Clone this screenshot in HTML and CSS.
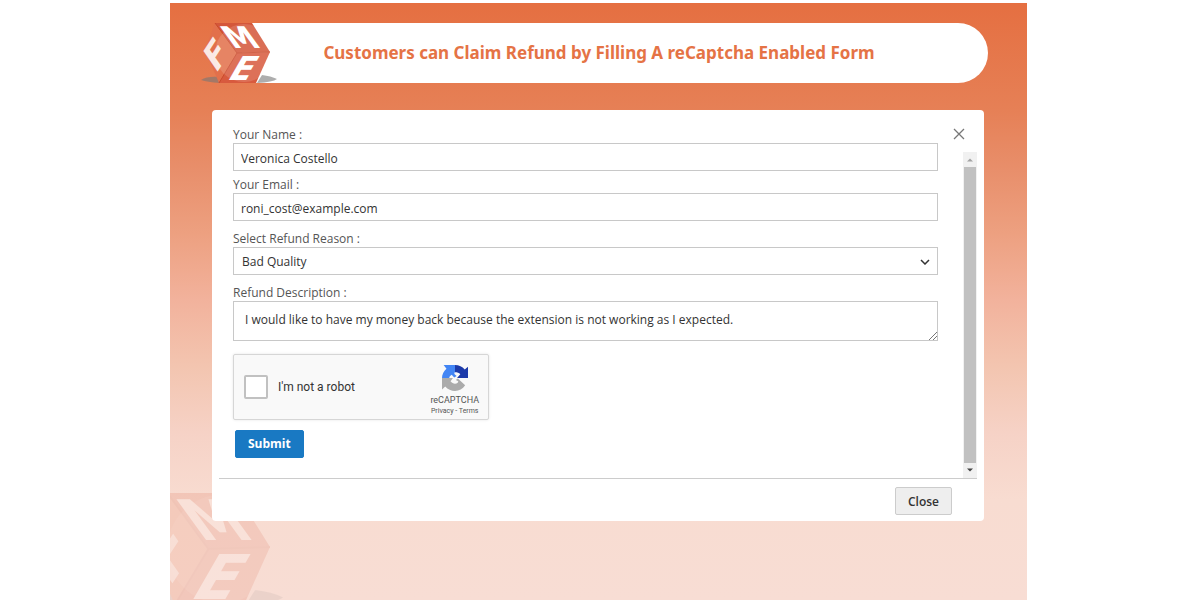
FILE: index.html
```html
<!DOCTYPE html>
<html lang="en">
<head>
  <meta charset="UTF-8">
  <meta name="viewport" content="width=device-width, initial-scale=1.0">
  <title>Refund Request</title>
  <link rel="stylesheet" href="styles.css">
</head>
<body>
<main class="stage">
  <svg class="watermark" viewBox="0 0 90 75" aria-hidden="true">
    <use href="#cube"/>
  </svg>
  <header class="banner">
    <svg class="logo" viewBox="0 0 90 75" role="img" aria-label="FME">
      <g id="cube">
        <path class="cube-shadow" d="M6 65 Q12 61 25 62 L25 68 Q12 67 6 65Z M62 68 L67 60 Q76 61 82 64 Q78 67 62 68Z"/>
        <path class="cube-left" d="M20 8 L42 38 L24 68 L10 35Z"/>
        <path class="cube-top" d="M20 8 L57 8 L75 37 L42 38Z"/>
        <path class="cube-front" d="M42 38 L75 37 L61 68 L24 68Z"/>
        <path class="cube-edge" d="M20 8 L42 38 L24 68 M42 38 L75 37"/>
        <circle class="cube-shine" cx="49" cy="38" r="29"/>
        <text class="cube-letter letter-f" transform="matrix(.55 -.84 .57 .82 21 59)">F</text>
        <text class="cube-letter letter-m" transform="translate(38 33) skewX(36)">M</text>
        <text class="cube-letter letter-e" transform="translate(31 65) skewX(-30)">E</text>
      </g>
    </svg>
    <h1>Customers can Claim Refund by Filling A reCaptcha Enabled Form</h1>
  </header>

  <section class="modal">
    <div class="modal-body">
      <form class="refund-form">
        <div class="field">
          <label for="name">Your Name :</label>
          <input type="text" id="name" value="Veronica Costello">
        </div>
        <div class="field">
          <label for="email">Your Email :</label>
          <input type="text" id="email" value="roni_cost@example.com">
        </div>
        <div class="field field-spaced">
          <label for="reason">Select Refund Reason :</label>
          <div class="select-wrap">
            <select id="reason">
              <option>Bad Quality</option>
            </select>
            <svg class="chevron" viewBox="0 0 10 6" aria-hidden="true"><path d="M1 1 L5 5 L9 1"/></svg>
          </div>
        </div>
        <div class="field field-spaced">
          <label for="description">Refund Description :</label>
          <div class="select-wrap">
            <textarea id="description" rows="1">I would like to have my money back because the extension is not working as I expected.</textarea>
            <svg class="grip" viewBox="0 0 8 8" aria-hidden="true"><path d="M0 8 L8 0 M4 8 L8 4"/></svg>
          </div>
        </div>
        <div class="captcha">
          <input type="checkbox" id="robot">
          <label for="robot">I'm not a robot</label>
          <div class="captcha-brand">
            <svg class="captcha-logo" viewBox="0 0 64 64" aria-hidden="true">
              <path fill="#1c3aa9" d="M32 0 C42 0 50 4 56 11 L64 4 V32 H37 L45 23 C42 19 38 18 32 18Z"/>
              <path fill="#4285f4" d="M32 0 V18 C30 19 30 20 31 23 L36 27 L30 31 L24 24 C20 26 18 29 18 32 H0 C0 23 4 15 11 9 L4 0Z"/>
              <path fill="#ababab" d="M0 32 H27 L21 40 C24 44 28 46 32 46 C37 46 40 43 40 40 L34 37 L39 33 L57 50 C51 59 42 64 32 64 C23 64 14 60 8 53 L0 60Z"/>
            </svg>
            <span class="captcha-name">reCAPTCHA</span>
            <span class="captcha-links"><a href="#">Privacy</a> - <a href="#">Terms</a></span>
          </div>
        </div>
        <button type="submit" class="submit">Submit</button>
      </form>
      <div class="modal-side">
        <button type="button" class="dismiss" aria-label="Close">
          <svg viewBox="0 0 12 12"><path d="M1 1 L11 11 M11 1 L1 11"/></svg>
        </button>
        <div class="scrollbar">
          <svg class="arrow" viewBox="0 0 14 14"><path fill="#a3a3a3" d="M4 9 L7 6 L10 9Z"/></svg>
          <div class="thumb"></div>
          <svg class="arrow" viewBox="0 0 14 14"><path fill="#444" d="M4 5 L7 8 L10 5Z"/></svg>
        </div>
      </div>
    </div>
    <footer class="modal-footer">
      <button type="button" class="close">Close</button>
    </footer>
  </section>
</main>
</body>
</html>
```

FILE: styles.css
```css
* {
  box-sizing: border-box;
}

body {
  margin: 0;
  padding: 3px 173px 3px 170px;
  background: #fff;
  color: #333;
  font-family: "Open Sans", "Noto Sans", sans-serif;
  font-size: 12px;
}

input, select, textarea, button {
  font-family: inherit;
  font-size: 12px;
  color: #333;
}

.stage {
  position: relative;
  overflow: hidden;
  padding: 20px 39px 79px 42px;
  background: linear-gradient(#e56f41 0, #e68056 107px, #e88e6a 164px, #eda080 230px, #f2b29c 297px, #f3c5b0 364px, #f6d2c6 430px, #f8dcd1 497px, #f8ddd4 100%);
}

/* banner */
.banner {
  position: relative;
  display: flex;
  align-items: center;
  justify-content: center;
  height: 60px;
  margin-left: 30px;
  padding-right: 32px;
  border-radius: 0 30px 30px 0;
  background: #fff;
}

.banner h1 {
  margin: 0;
  color: #e57345;
  font-family: "Noto Sans", sans-serif;
  font-size: 17px;
  font-weight: 700;
  line-height: 24px;
}

.logo {
  position: absolute;
  left: -47px;
  top: -8px;
  width: 90px;
  height: 75px;
}

.watermark {
  position: absolute;
  left: -40px;
  bottom: -18px;
  width: 168px;
  height: 140px;
  opacity: .16;
}

.cube-shadow {
  fill: #777;
  opacity: .6;
}

.cube-left {
  fill: #e2704b;
}

.cube-top {
  fill: #d4573a;
}

.cube-front {
  fill: #d85a3e;
}

.cube-edge {
  fill: none;
  stroke: #c94a2c;
}

.cube-shine {
  fill: #fff;
  opacity: .14;
}

.cube-letter {
  fill: #fff;
  font-family: "DejaVu Sans", sans-serif;
  font-weight: 700;
}

.letter-f {
  font-size: 34px;
  opacity: .85;
}

.letter-m {
  font-size: 30px;
}

.letter-e {
  font-size: 33px;
}

/* modal */
.modal {
  position: relative;
  margin: 27px 4px 0 0;
  padding: 15px 7px 6px;
  border-radius: 4px;
  background: #fff;
}

.modal-body {
  display: flex;
  border-bottom: 1px solid #ccc;
}

.refund-form {
  flex: 1;
  display: flex;
  flex-direction: column;
  align-items: flex-start;
  padding: 0 0 20px 14px;
}

.field {
  width: 100%;
  margin-bottom: 4px;
}

.field-spaced {
  margin-top: 4px;
}

.field label {
  display: block;
  height: 18px;
  color: #555;
  line-height: 20px;
}

.field input, .field select, .field textarea {
  display: block;
  width: 100%;
  height: 28px;
  padding: 0 8px;
  border: 1px solid #c8c8c8;
  border-radius: 0;
  background: #fff;
}

.field input {
  padding: 2px 7px 0;
}

.select-wrap {
  position: relative;
}

.field select {
  appearance: none;
}

.field textarea {
  height: 40px;
  padding: 9px 11px;
  line-height: 18px;
  resize: none;
  overflow: hidden;
}

.chevron {
  position: absolute;
  right: 8px;
  top: 12px;
  width: 10px;
  height: 6px;
  fill: none;
  stroke: #333;
  stroke-width: 1.5;
}

.grip {
  position: absolute;
  right: 1px;
  bottom: 1px;
  width: 8px;
  height: 8px;
  stroke: #777;
}

/* captcha */
.captcha {
  display: flex;
  align-items: center;
  width: 256px;
  height: 66px;
  margin-top: 9px;
  padding: 0 9px 0 10px;
  border: 1px solid #d6d6d6;
  border-radius: 2px;
  background: #f9f9f9;
  box-shadow: 0 0 3px rgba(0, 0, 0, .1);
  font-family: Roboto, sans-serif;
}

.captcha input {
  appearance: none;
  width: 24px;
  height: 24px;
  margin: 0 10px 0 0;
  border: 2px solid #c1c1c1;
  border-radius: 2px;
  background: #fff;
}

.captcha-brand {
  display: flex;
  flex-direction: column;
  align-items: center;
  margin-left: auto;
  padding-top: 7px;
  color: #555;
}

.captcha-logo {
  width: 26px;
  height: 26px;
  margin-bottom: 4px;
}

.captcha-name {
  font-size: 9px;
  line-height: 11px;
}

.captcha-links {
  font-size: 7px;
  line-height: 11px;
}

.captcha-links a {
  color: inherit;
  text-decoration: none;
}

.submit {
  height: 28px;
  margin: 10px 0 0 2px;
  padding: 0 12px 2px;
  border: 1px solid #1979c3;
  border-radius: 2px;
  background: #1979c3;
  color: #fff;
  font-weight: 700;
}

.modal-side {
  display: flex;
  flex-direction: column;
  width: 39px;
}

.dismiss {
  width: 12px;
  height: 12px;
  margin: 3px 0 12px 15px;
  padding: 0;
  border: 0;
  background: none;
}

.dismiss svg {
  display: block;
  fill: none;
  stroke: #777;
  stroke-width: 1.3;
}

.scrollbar {
  flex: 1;
  display: flex;
  flex-direction: column;
  align-self: flex-end;
  width: 14px;
  background: #f1f1f1;
}

.arrow {
  height: 15px;
}

.thumb {
  flex: 1;
  margin: 0 1px;
  background: #c1c1c1;
}

.modal-footer {
  display: flex;
  justify-content: flex-end;
  padding: 8px 25px 0 0;
}

.close {
  height: 28px;
  padding: 0 12px;
  border: 1px solid #ccc;
  border-radius: 2px;
  background: #eee;
  font-weight: 600;
}
```
